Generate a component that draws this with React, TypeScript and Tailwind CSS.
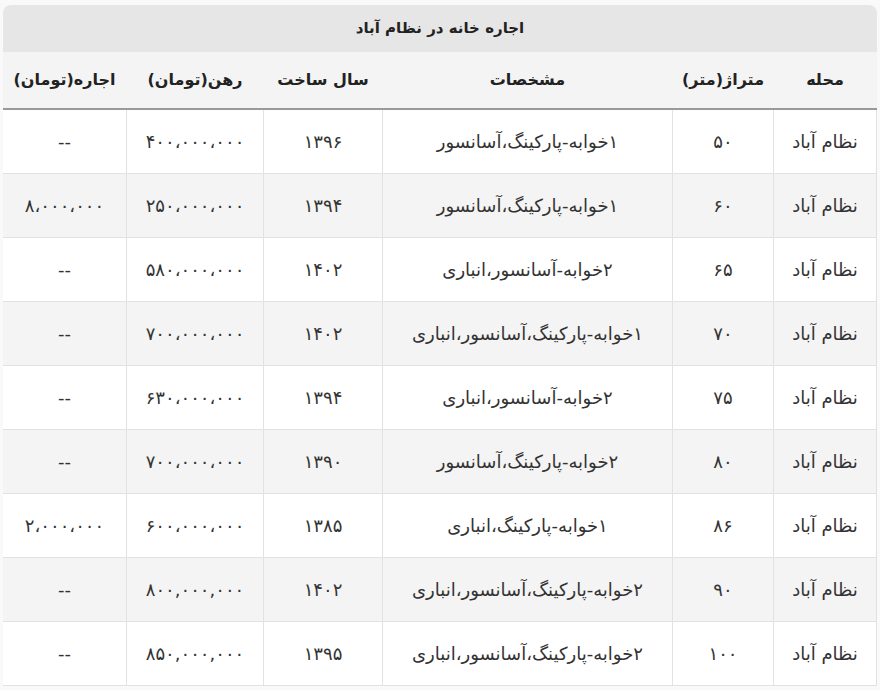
const rows = [
  ["نظام آباد", "۵۰", "۱خوابه-پارکینگ،آسانسور", "۱۳۹۶", "۴۰۰،۰۰۰،۰۰۰", "--"],
  ["نظام آباد", "۶۰", "۱خوابه-پارکینگ،آسانسور", "۱۳۹۴", "۲۵۰،۰۰۰،۰۰۰", "۸،۰۰۰،۰۰۰"],
  ["نظام آباد", "۶۵", "۲خوابه-آسانسور،انباری", "۱۴۰۲", "۵۸۰،۰۰۰،۰۰۰", "--"],
  ["نظام آباد", "۷۰", "۱خوابه-پارکینگ،آسانسور،انباری", "۱۴۰۲", "۷۰۰،۰۰۰،۰۰۰", "--"],
  ["نظام آباد", "۷۵", "۲خوابه-آسانسور،انباری", "۱۳۹۴", "۶۳۰،۰۰۰،۰۰۰", "--"],
  ["نظام آباد", "۸۰", "۲خوابه-پارکینگ،آسانسور", "۱۳۹۰", "۷۰۰،۰۰۰،۰۰۰", "--"],
  ["نظام آباد", "۸۶", "۱خوابه-پارکینگ،انباری", "۱۳۸۵", "۶۰۰،۰۰۰،۰۰۰", "۲،۰۰۰،۰۰۰"],
  ["نظام آباد", "۹۰", "۲خوابه-پارکینگ،آسانسور،انباری", "۱۴۰۲", "۸۰۰,۰۰۰,۰۰۰", "--"],
  ["نظام آباد", "۱۰۰", "۲خوابه-پارکینگ،آسانسور،انباری", "۱۳۹۵", "۸۵۰,۰۰۰,۰۰۰", "--"],
];

const heads = ["محله", "متراژ(متر)", "مشخصات", "سال ساخت", "رهن(تومان)", "اجاره(تومان)"];

export default function App() {
  return (
    <div
      dir="rtl"
      className="min-h-[690px] w-[880px] bg-[#f9f9f9] px-[3px] pt-[5px]"
      style={{ fontFamily: "'DejaVu Sans', sans-serif" }}
    >
      <div className="w-[874px] overflow-hidden rounded-t-[8px]">
        <div className="flex h-[47px] items-center justify-center bg-[#e6e6e6] text-[15px] font-bold text-[#222]">
          اجاره خانه در نظام آباد
        </div>
        <table className="w-full table-fixed border-collapse text-[18px] text-[#333]">
          <colgroup>
            <col className="w-[103px]" />
            <col className="w-[101px]" />
            <col className="w-[290px]" />
            <col className="w-[119px]" />
            <col className="w-[137px]" />
            <col className="w-[124px]" />
          </colgroup>
          <thead>
            <tr className="h-[57px] bg-[#f4f4f4] border-b-2 border-[#999]">
              {heads.map((h) => (
                <th key={h} className="text-center font-bold text-[#222] text-[16px]">
                  {h}
                </th>
              ))}
            </tr>
          </thead>
          <tbody>
            {rows.map((r, i) => (
              <tr key={i} className={i % 2 === 1 ? "h-[64px] bg-[#f4f4f4]" : "h-[64px] bg-white"}>
                {r.map((c, j) => (
                  <td key={j} className="border border-[#e2e2e2] text-center align-middle">
                    {c}
                  </td>
                ))}
              </tr>
            ))}
          </tbody>
        </table>
      </div>
    </div>
  );
}
